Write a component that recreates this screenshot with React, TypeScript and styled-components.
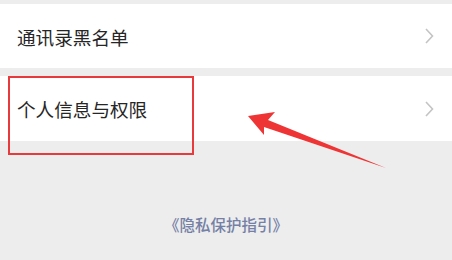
import styled, { createGlobalStyle } from 'styled-components';

const GlobalStyle = createGlobalStyle`
  html, body {
    margin: 0;
    padding: 0;
    background: #ededed;
  }
  body {
    font-family: "Noto Sans CJK SC", "Noto Sans", sans-serif;
  }
`;

const Page = styled.div`
  position: relative;
  width: 452px;
  height: 260px;
  overflow: hidden;
  background: #ededed;
  padding-top: 4px;
  box-sizing: border-box;
  display: flex;
  flex-direction: column;
`;

const Group = styled.div<{ $gap?: number }>`
  background: #fff;
  margin-top: ${(p) => p.$gap ?? 0}px;
`;

const Row = styled.div<{ $h: number }>`
  height: ${(p) => p.$h}px;
  display: flex;
  align-items: center;
  justify-content: space-between;
  padding: 0 18px 0 17px;
`;

const Label = styled.span`
  font-size: 18.6px;
  font-weight: 400;
  color: #262626;
  line-height: 1;
  margin-top: 2px;
`;

const Footer = styled.div`
  margin-top: 76px;
  display: flex;
  justify-content: center;
`;

const FooterLink = styled.span`
  font-size: 15.5px;
  font-weight: 500;
  color: #7580a6;
  line-height: 1;
`;

const Highlight = styled.div`
  position: absolute;
  left: 8px;
  top: 76px;
  width: 186px;
  height: 79px;
  border: 2.5px solid #e8393d;
  box-sizing: border-box;
`;

const ArrowLayer = styled.svg`
  position: absolute;
  left: 0;
  top: 0;
`;

const Chevron = () => (
  <svg width="10" height="18" viewBox="0 0 10 18">
    <path d="M2 2 L8.5 9 L2 16" fill="none" stroke="#c4c4c4" strokeWidth="1.6" />
  </svg>
);

export default function App() {
  return (
    <>
      <GlobalStyle />
      <Page>
        <Group>
          <Row $h={64}>
            <Label>通讯录黑名单</Label>
            <Chevron />
          </Row>
        </Group>
        <Group $gap={8}>
          <Row $h={65}>
            <Label>个人信息与权限</Label>
            <Chevron />
          </Row>
        </Group>
        <Footer>
          <FooterLink>《隐私保护指引》</FooterLink>
        </Footer>
        <Highlight />
        <ArrowLayer width="452" height="260" viewBox="0 0 452 260">
          <polygon
            points="248,116 275,112 268,120 386,168 264,127 264,135"
            fill="#ee3434"
          />
        </ArrowLayer>
      </Page>
    </>
  );
}
